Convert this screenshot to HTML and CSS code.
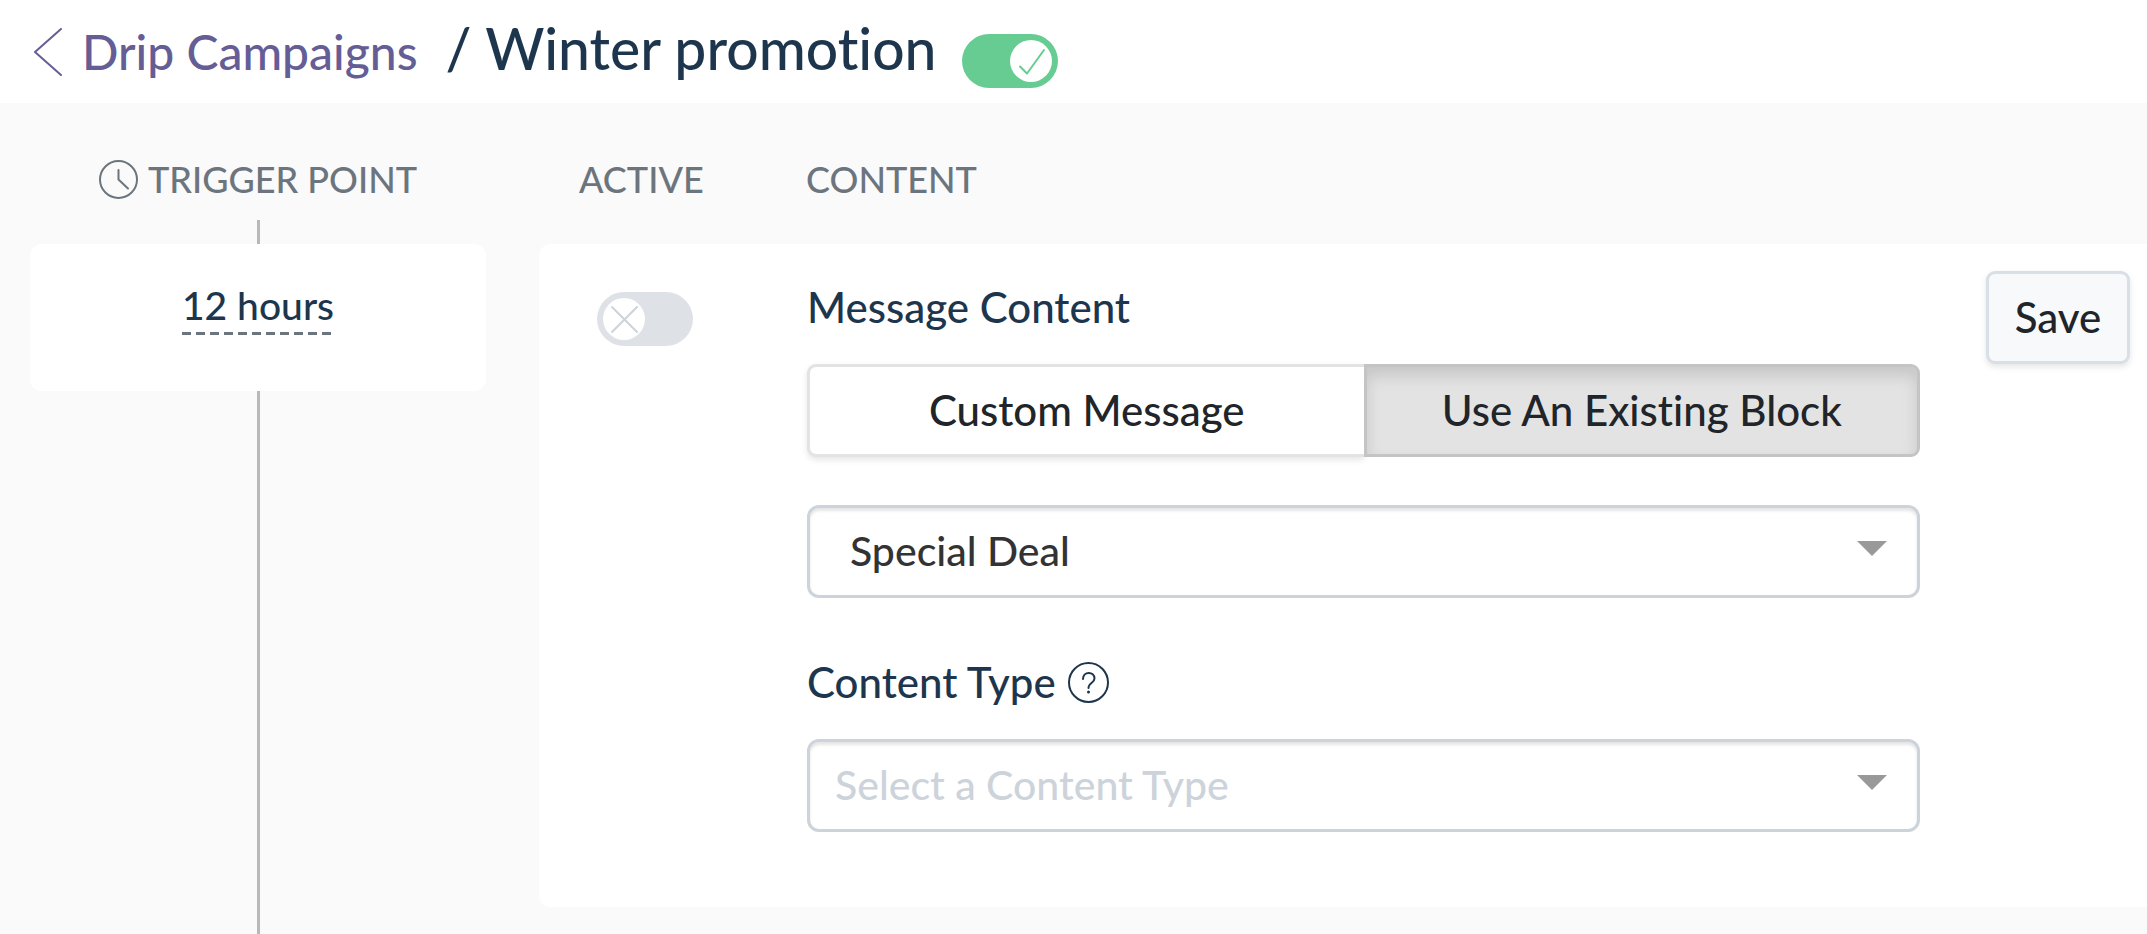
FILE: index.html
```html
<!DOCTYPE html>
<html lang="en">
<head>
    <meta charset="UTF-8">
    <meta name="viewport" content="width=device-width, initial-scale=1.0">
    <title>Winter promotion - Drip Campaigns</title>
    <link rel="stylesheet" href="styles.css">
</head>
<body>
    <header class="page-header">
        <a class="back-link" href="#">
            <svg class="back-icon" viewBox="0 0 28 48" aria-hidden="true">
                <path d="M27 1 L1 24 L27 47"/>
            </svg>
            Drip Campaigns
        </a>
        <h1>/ Winter promotion</h1>
        <label class="toggle">
            <input type="checkbox" aria-label="Campaign active" checked>
            <span class="knob">
                <svg class="icon-check" viewBox="0 0 42 42" aria-hidden="true"><path d="M10 26.5 L17 33.5 L34 10"/></svg>
                <svg class="icon-cross" viewBox="0 0 42 42" aria-hidden="true"><path d="M9 9 L34 34 M34 9 L9 34"/></svg>
            </span>
        </label>
    </header>

    <main class="campaign">
        <section class="trigger-column">
            <h2 class="column-title">
                <svg class="clock-icon" viewBox="0 0 39 39" aria-hidden="true">
                    <circle cx="19.5" cy="19.5" r="18.5"/>
                    <path d="M19.5 10 V19.5 L29 28.5"/>
                </svg>
                TRIGGER POINT
            </h2>
            <div class="line line-start"></div>
            <div class="trigger-card">
                <button type="button" class="trigger-time">12 hours</button>
            </div>
            <div class="line line-rest"></div>
        </section>

        <section class="message-column">
            <div class="column-titles">
                <h2 class="column-title">ACTIVE</h2>
                <h2 class="column-title">CONTENT</h2>
            </div>
            <form class="message-card">
                <div class="active-cell">
                    <label class="toggle">
                        <input type="checkbox" aria-label="Message active">
                        <span class="knob">
                            <svg class="icon-check" viewBox="0 0 42 42" aria-hidden="true"><path d="M10 26.5 L17 33.5 L34 10"/></svg>
                            <svg class="icon-cross" viewBox="0 0 42 42" aria-hidden="true"><path d="M9 9 L34 34 M34 9 L9 34"/></svg>
                        </span>
                    </label>
                </div>
                <div class="content-cell">
                    <h3 class="field-label" id="content-label">Message Content</h3>
                    <div class="button-group" role="group" aria-labelledby="content-label">
                        <button type="button">Custom Message</button>
                        <button type="button" class="selected">Use An Existing Block</button>
                    </div>
                    <div class="select-box">
                        <select aria-label="Block">
                            <option>Special Deal</option>
                        </select>
                    </div>
                    <div class="label-row">
                        <label class="field-label" for="content-type">Content Type</label>
                        <svg class="help-icon" viewBox="0 0 41 41" aria-hidden="true">
                            <circle cx="20.5" cy="20.5" r="19.5"/>
                            <path d="M15 17 C15 9 26.5 9 26.5 16.5 C26.5 21 20.5 20.5 20.5 26"/>
                            <circle class="dot" cx="20.5" cy="30" r="1.5"/>
                        </svg>
                    </div>
                    <div class="select-box">
                        <select id="content-type" class="empty">
                            <option>Select a Content Type</option>
                        </select>
                    </div>
                </div>
                <button type="button" class="save-button">Save</button>
            </form>
        </section>
    </main>
</body>
</html>
```
FILE: styles.css
```css
* {
    box-sizing: border-box;
}

body {
    display: flex;
    flex-direction: column;
    min-height: 100vh;
    margin: 0;
    background-color: #fafafa;
    color: #212529;
    font-family: Lato, sans-serif;
    font-size: 42px;
    font-weight: 500;
    line-height: 48px;
    font-variant-ligatures: none;
}

h1, h2, h3 {
    margin: 0;
    font-weight: 500;
}

button, select {
    font: inherit;
    color: inherit;
    cursor: pointer;
}

svg {
    display: block;
    fill: none;
    stroke: currentColor;
    stroke-width: 2;
    stroke-linecap: round;
    stroke-linejoin: round;
}

/* header */
.page-header {
    display: flex;
    align-items: flex-start;
    padding: 14px 34px 13px;
    background-color: #fff;
}

.back-link {
    display: flex;
    align-items: center;
    gap: 20px;
    color: #655d96;
    font-size: 48px;
    line-height: 76px;
    text-decoration: none;
}

.back-icon {
    width: 28px;
    height: 48px;
}

.page-header h1 {
    margin: 0 26px 0 28px;
    color: #1d364d;
    font-size: 57px;
    line-height: 68px;
}

.page-header .toggle {
    margin-top: 20px;
}

/* toggle switch */
.toggle {
    display: grid;
    width: 96px;
    height: 54px;
    cursor: pointer;
}

.toggle input,
.toggle .knob {
    grid-area: 1 / 1;
}

.toggle input {
    appearance: none;
    width: 96px;
    height: 54px;
    margin: 0;
    border-radius: 27px;
    background-color: #dee2e7;
    cursor: pointer;
}

.toggle input:checked {
    background-color: #66cc91;
}

.knob {
    z-index: 1;
    align-self: center;
    width: 42px;
    height: 42px;
    margin: 0 6px;
    border-radius: 50%;
    background-color: #fff;
    color: #cdd3da;
}

.toggle input:checked + .knob {
    justify-self: end;
    color: #66cc91;
}

.icon-check,
.toggle input:checked + .knob .icon-cross {
    display: none;
}

.toggle input:checked + .knob .icon-check {
    display: block;
}

/* columns */
.campaign {
    flex: 1;
    display: grid;
    grid-template-columns: 456px 1fr;
    gap: 53px;
    padding-left: 30px;
}

.column-title {
    color: #6c757d;
    font-size: 36px;
    line-height: 48px;
}

.trigger-column {
    display: flex;
    flex-direction: column;
    align-items: center;
    padding-top: 52px;
}

.trigger-column .column-title {
    display: flex;
    align-items: center;
    gap: 10px;
    margin-bottom: 17px;
}

.clock-icon {
    width: 39px;
    height: 39px;
}

.line {
    width: 3px;
    background-color: #b8b8b8;
}

.line-start {
    height: 24px;
}

.line-rest {
    flex: 1;
}

.trigger-card {
    width: 100%;
    height: 147px;
    padding-top: 36px;
    border-radius: 12px;
    background-color: #fff;
    text-align: center;
}

/* dashed underline, 9px dashes with 5px gaps */
.trigger-time {
    padding: 0 0 6px;
    border: 0;
    background: repeating-linear-gradient(to right, #6c757d 0 9px, transparent 9px 14px) bottom / 100% 3px no-repeat;
    color: #1d364d;
    font-size: 39px;
}

.message-column {
    padding: 52px 0 27px;
}

.column-titles {
    display: grid;
    grid-template-columns: 227px 1fr;
    margin-bottom: 41px;
    padding-left: 40px;
}

.message-card {
    display: grid;
    grid-template-columns: 268px 1fr 144px;
    align-items: start;
    padding: 27px 17px 75px 0;
    border-radius: 12px 0 0 12px;
    background-color: #fff;
}

.active-cell {
    padding: 21px 58px;
}

.content-cell {
    padding: 12px 66px 0 0;
}

.field-label {
    color: #1d364d;
    font-size: 42px;
    line-height: 48px;
}

/* custom message / existing block */
.button-group {
    display: grid;
    grid-template-columns: 1fr 1fr;
    margin: 33px 0 48px;
}

.button-group button {
    height: 93px;
    padding: 0 0 2px;
    border: 3px solid #e3e3e3;
    border-right: 0;
    border-radius: 9px 0 0 9px;
    background-color: #fff;
    box-shadow: 0 3px 6px rgba(0, 0, 0, 0.1);
}

.button-group .selected {
    z-index: 1;
    border: 3px solid #c4c4c4;
    border-radius: 0 9px 9px 0;
    background-color: #e3e3e3;
    box-shadow: inset 0 9px 15px rgba(0, 0, 0, 0.125);
}

/* drop-downs */
.select-box {
    display: grid;
    align-items: center;
}

.select-box select,
.select-box::after {
    grid-area: 1 / 1;
}

.select-box select {
    appearance: none;
    width: 100%;
    height: 93px;
    padding: 0 80px 2px 40px;
    border: 3px solid #cdd3da;
    border-radius: 12px;
    background-color: #fff;
    box-shadow: inset 0 3px 3px rgba(0, 0, 0, 0.1);
    color: #333;
    font-size: 41px;
}

.select-box select.empty {
    padding-left: 25px;
    color: #cdd3da;
}

.select-box::after {
    content: "";
    z-index: 1;
    justify-self: end;
    width: 30px;
    height: 15px;
    margin: 0 33px 6px 0;
    background-color: #999;
    clip-path: polygon(0 0, 100% 0, 50% 100%);
    pointer-events: none;
}

.label-row {
    display: flex;
    align-items: center;
    gap: 12px;
    margin: 60px 0 33px;
}

.help-icon {
    width: 41px;
    height: 41px;
    color: #1d364d;
}

.help-icon .dot {
    fill: currentColor;
    stroke: none;
}

.save-button {
    height: 93px;
    padding: 0 0 2px;
    border: 3px solid #d9dfe6;
    border-radius: 9px;
    background-color: #f8f9fb;
    box-shadow: 0 3px 6px rgba(0, 0, 0, 0.1);
}
```
